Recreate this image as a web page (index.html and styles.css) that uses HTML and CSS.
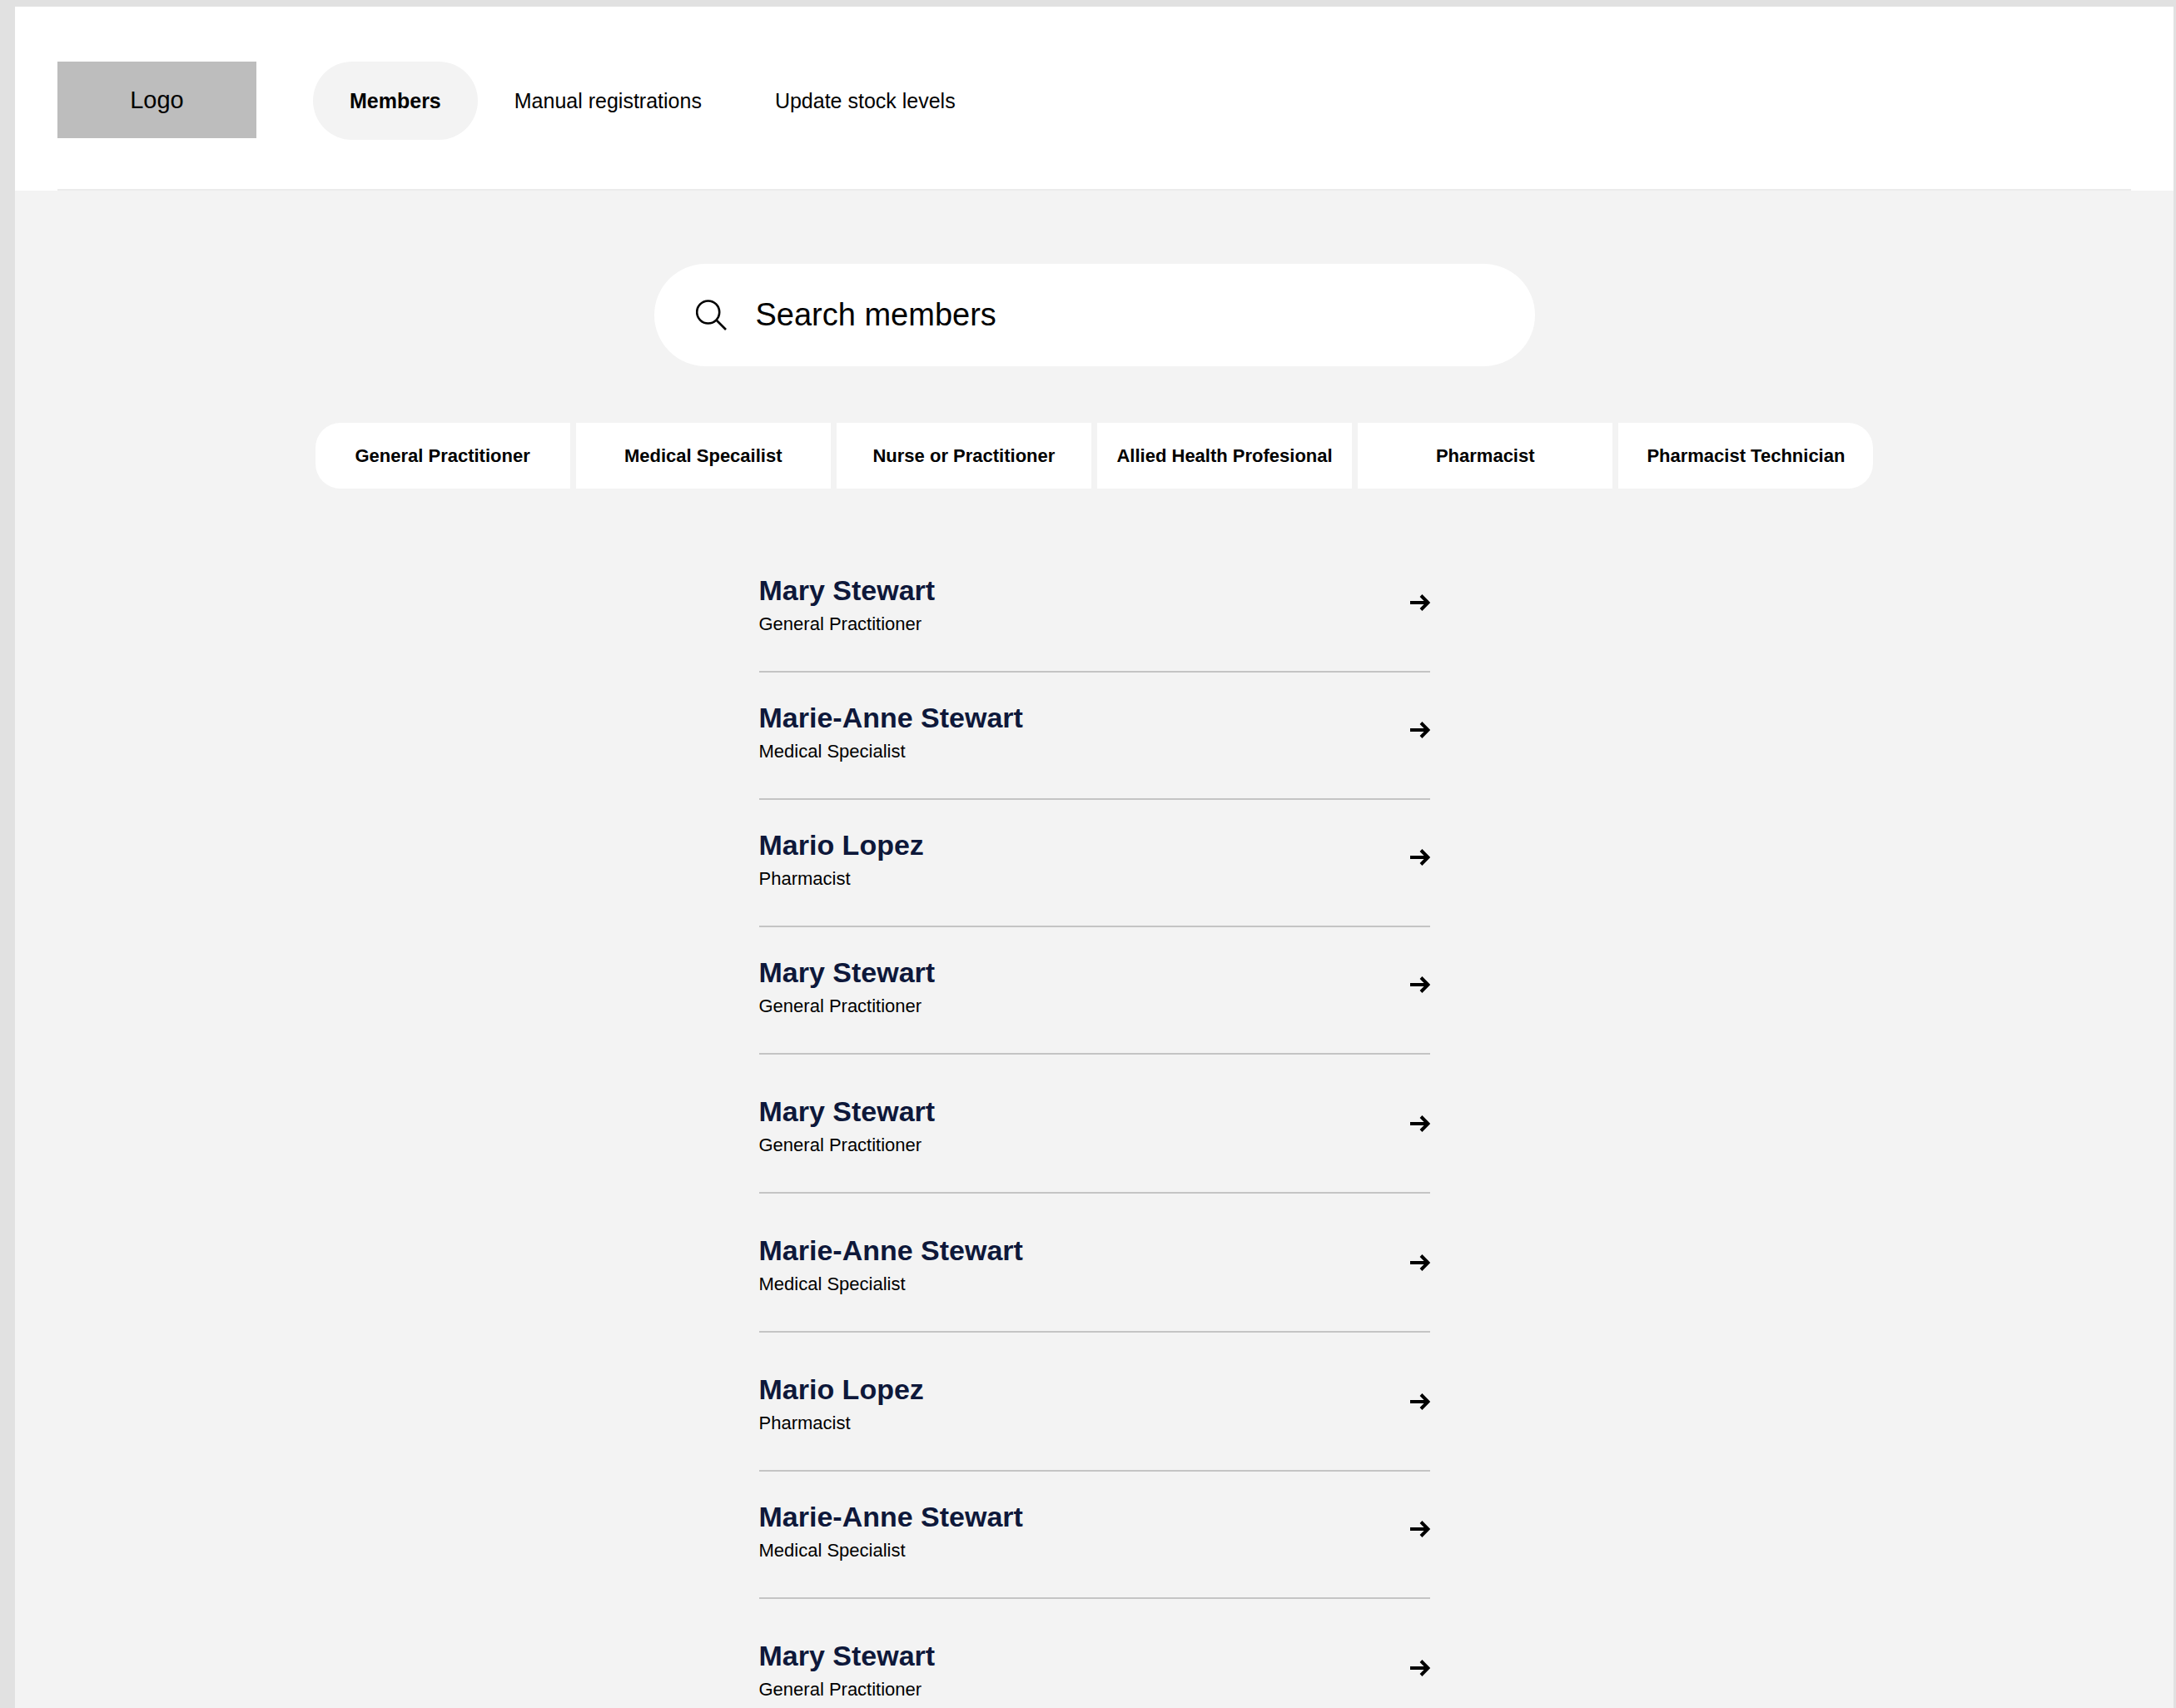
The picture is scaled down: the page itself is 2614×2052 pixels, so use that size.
FILE: index.html
```html
<!DOCTYPE html>
<html lang="en">
<head>
  <meta charset="utf-8">
  <meta name="viewport" content="width=device-width, initial-scale=1">
  <title>Members</title>
  <link rel="stylesheet" href="styles.css">
</head>
<body>
  <svg class="sprite" aria-hidden="true">
    <symbol id="arrow" viewBox="0 0 24 20">
      <path d="M0 10H21M13 1.500L21.500 10L13 18.500" fill="none" stroke="currentColor" stroke-width="4"/>
    </symbol>
  </svg>
  <div class="page">
    <header class="header">
      <div class="header-inner">
        <a class="logo" href="#">Logo</a>
        <nav class="nav">
          <a class="nav-link active" href="#" aria-current="page">Members</a>
          <a class="nav-link" href="#">Manual registrations</a>
          <a class="nav-link" href="#">Update stock levels</a>
        </nav>
      </div>
    </header>
    <main class="main">
      <form class="search" role="search">
        <svg class="search-icon" viewBox="0 0 37 37" aria-hidden="true">
          <circle cx="14.700" cy="15" r="13.500"/>
          <path d="M24.500 24.500L36 36"/>
        </svg>
        <input class="search-input" type="search" placeholder="Search members" aria-label="Search members">
      </form>
      <div class="filters">
        <button class="filter" type="button">General Practitioner</button>
        <button class="filter" type="button">Medical Specailist</button>
        <button class="filter" type="button">Nurse or Practitioner</button>
        <button class="filter" type="button">Allied Health Profesional</button>
        <button class="filter" type="button">Pharmacist</button>
        <button class="filter" type="button">Pharmacist Technician</button>
      </div>
      <ul class="members">
        <li><a class="member" href="#"><span class="info"><span class="name">Mary Stewart</span><span class="role">General Practitioner</span></span><svg class="arrow" aria-hidden="true"><use href="#arrow"/></svg></a></li>
        <li><a class="member" href="#"><span class="info"><span class="name">Marie-Anne Stewart</span><span class="role">Medical Specialist</span></span><svg class="arrow" aria-hidden="true"><use href="#arrow"/></svg></a></li>
        <li><a class="member" href="#"><span class="info"><span class="name">Mario Lopez</span><span class="role">Pharmacist</span></span><svg class="arrow" aria-hidden="true"><use href="#arrow"/></svg></a></li>
        <li><a class="member" href="#"><span class="info"><span class="name">Mary Stewart</span><span class="role">General Practitioner</span></span><svg class="arrow" aria-hidden="true"><use href="#arrow"/></svg></a></li>
        <li><a class="member roomy" href="#"><span class="info"><span class="name">Mary Stewart</span><span class="role">General Practitioner</span></span><svg class="arrow" aria-hidden="true"><use href="#arrow"/></svg></a></li>
        <li><a class="member roomy" href="#"><span class="info"><span class="name">Marie-Anne Stewart</span><span class="role">Medical Specialist</span></span><svg class="arrow" aria-hidden="true"><use href="#arrow"/></svg></a></li>
        <li><a class="member roomy" href="#"><span class="info"><span class="name">Mario Lopez</span><span class="role">Pharmacist</span></span><svg class="arrow" aria-hidden="true"><use href="#arrow"/></svg></a></li>
        <li><a class="member" href="#"><span class="info"><span class="name">Marie-Anne Stewart</span><span class="role">Medical Specialist</span></span><svg class="arrow" aria-hidden="true"><use href="#arrow"/></svg></a></li>
        <li><a class="member roomy" href="#"><span class="info"><span class="name">Mary Stewart</span><span class="role">General Practitioner</span></span><svg class="arrow" aria-hidden="true"><use href="#arrow"/></svg></a></li>
      </ul>
    </main>
  </div>
</body>
</html>
```
FILE: styles.css
```css
* {
  box-sizing: border-box;
}

body {
  margin: 0;
  padding: 8px 3px 0 18px;
  background: #e1e1e1;
  color: #000;
  font-family: "Liberation Sans", Arial, sans-serif;
}

a {
  color: inherit;
  text-decoration: none;
}

.sprite {
  display: none;
}

.page {
  min-height: calc(100vh - 8px);
  background: #f3f3f3;
}

/* Header */
.header {
  padding: 0 51px;
  background: #fff;
}

.header-inner {
  display: flex;
  align-items: flex-start;
  gap: 68px;
  padding: 66px 0 59px;
  border-bottom: 2px solid #ebebeb;
}

.logo {
  display: flex;
  align-items: center;
  justify-content: center;
  flex-shrink: 0;
  width: 239px;
  height: 92px;
  background: #bdbdbd;
  font-size: 29px;
}

.nav {
  display: flex;
}

.nav-link {
  padding: 0 44px;
  border-radius: 47px;
  font-size: 25px;
  line-height: 94px;
}

.nav-link.active {
  background: #f3f3f3;
  font-weight: bold;
}

/* Content */
.main {
  display: flex;
  flex-direction: column;
  align-items: center;
  gap: 68px;
  padding-top: 88px;
}

.search {
  display: flex;
  align-items: center;
  gap: 35px;
  width: 100%;
  max-width: 1058px;
  height: 123px;
  padding: 0 50px;
  border-radius: 62px;
  background: #fff;
}

.search-icon {
  flex-shrink: 0;
  width: 37px;
  height: 37px;
  fill: none;
  stroke: #000;
  stroke-width: 2.6;
}

.search-input {
  flex: 1;
  min-width: 0;
  padding: 0;
  border: 0;
  outline: 0;
  background: none;
  appearance: none;
  font: 38px "Liberation Sans", Arial, sans-serif;
}

.search-input::placeholder {
  color: #000;
  opacity: 1;
}

.filters {
  display: grid;
  grid-template-columns: repeat(6, 1fr);
  gap: 7px;
  width: 100%;
  max-width: 1872px;
}

.filter {
  height: 79px;
  padding: 0;
  border: 0;
  background: #fff;
  color: #000;
  font: bold 22px "Liberation Sans", Arial, sans-serif;
}

.filter:first-child {
  border-radius: 30px 0 0 30px;
}

.filter:last-child {
  border-radius: 0 30px 30px 0;
}

/* Member list */
.members {
  width: 100%;
  max-width: 806px;
  margin: 0;
  padding: 0;
  list-style: none;
}

.member {
  display: flex;
  align-items: flex-start;
  justify-content: space-between;
  padding: 34px 0 42px;
  border-bottom: 2px solid #c4c4c4;
}

.member.roomy {
  padding-top: 48px;
}

li:last-child .member {
  padding-bottom: 0;
  border-bottom: 0;
}

.info {
  display: flex;
  flex-direction: column;
  gap: 7px;
}

.name {
  color: #0e183a;
  font-size: 34px;
  font-weight: bold;
  line-height: 40px;
}

.role {
  font-size: 22px;
  line-height: 28px;
}

.arrow {
  width: 24px;
  height: 20px;
  margin-top: 25px;
}
```
